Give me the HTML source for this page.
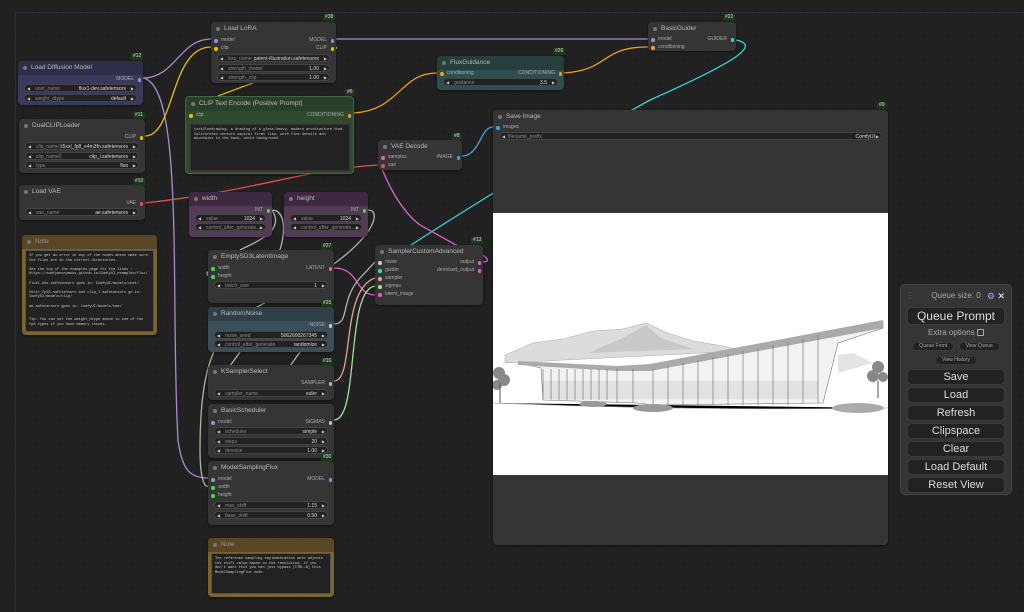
<!DOCTYPE html>
<html><head><meta charset="utf-8"><style>
*{margin:0;padding:0;box-sizing:border-box}
body{width:1024px;height:605px;overflow:hidden;background:#212121;font-family:"Liberation Sans",sans-serif;position:relative;
background-image:radial-gradient(#2a2a2a 0.6px,transparent 0.7px);background-size:6px 6px}
.n{position:absolute;background:#353535;border-radius:4px;box-shadow:0 1px 3px rgba(0,0,0,.5)}
.t{height:14px;line-height:14px;font-size:6.5px;color:#bbb;padding-left:13px;position:relative;border-radius:4px 4px 0 0}
.t:before{content:"";position:absolute;left:5px;top:5px;width:4px;height:4px;border-radius:50%;background:#777}
.id{position:absolute;font-size:5px;color:#ddd;background:#1d3a1d;padding:0 2px;line-height:7px;border-radius:1px}
.w{position:absolute;left:6px;right:6px;height:8px;background:#222;border-radius:4px;font-size:5px;line-height:8px;color:#888;padding:0 10px;border:0.5px solid #444}
.w:before{content:"◀";position:absolute;left:2px;color:#ccc;font-size:4px}
.w:after{content:"▶";position:absolute;right:2px;color:#ccc;font-size:4px;top:0}
.w b{position:absolute;right:10px;font-weight:normal;color:#ddd}
.p{position:absolute;font-size:5px;color:#aaa;line-height:7px}
.p i{position:absolute;top:2px;width:3.5px;height:3.5px;border-radius:50%}
.in{padding-left:10px}.in i{left:3px}
.out{text-align:right;padding-right:9px}.out i{right:2px}
.note{font-family:"Liberation Mono",monospace;font-size:3.6px;color:#ccc;white-space:pre;line-height:4.6px;position:absolute;background:#222;border:0.5px solid #555;padding:3px;overflow:hidden}
.qb{display:block;margin:0 6px 2px 6px;height:16px;background:#222;border:1px solid #3a3a3a;border-radius:5px;color:#ddd;font-size:11px;text-align:center;line-height:14px}
.sb{display:inline-block;height:9px;background:#222;border:1px solid #3a3a3a;border-radius:5px;color:#aaa;font-size:5px;line-height:7px;padding:0 6px}
</style></head><body>

<div style="position:absolute;left:15px;top:12px;width:1020px;height:600px;border:1px solid #2c3040;border-right:none;border-bottom:none"></div>

<svg width="1024" height="605" style="position:absolute;left:0;top:0" fill="none" stroke-width="1.3">
<path d="M143 78 C175 78 180 39 211 39" stroke="#a58cd0"/>
<path d="M143 78 C185 85 170 300 178 440 C182 470 190 478 208 478" stroke="#a58cd0"/>
<path d="M336 39 L648 39" stroke="#a58cd0"/>
<path d="M145 136 C175 136 170 47 211 47" stroke="#e8c000"/>
<path d="M336 47 C345 50 260 80 218 96" stroke="#e8c000"/>
<path d="M354 113 C400 110 400 73 437 73" stroke="#e8a020"/>
<path d="M564 73 C610 70 600 47 648 47" stroke="#e8a020"/>
<path d="M736 40 C760 45 740 60 650 100 C560 150 400 250 375 270" stroke="#30d8e0"/>
<path d="M145 203 C260 190 300 170 378 165" stroke="#e05050"/>
<path d="M462 156 C480 156 480 127 493 127" stroke="#40a8e0"/>
<path d="M334 268 C360 268 355 295 375 295" stroke="#e060d0"/>
<path d="M483 262 C495 262 480 250 465 250 L420 225 C400 210 385 180 378 157" stroke="#e060d0"/>
<path d="M272 210 C290 210 285 250 270 270 C240 300 200 260 208 276" stroke="#aab8a0"/>
<path d="M368 210 C385 210 370 250 290 290 C230 320 200 330 200 450 C200 480 205 488 208 486" stroke="#aab8a0"/>
<path d="M272 210 C285 230 260 240 240 250" stroke="#aab8a0"/>
<path d="M334 324 C350 324 340 300 360 278 L375 262" stroke="#aab8a0"/>
<path d="M334 381 C355 381 340 290 375 278" stroke="#e8a0a0"/>
<path d="M334 420 C360 420 345 290 375 286" stroke="#a0e0a0"/>
<path d="M240 352 L230 366 M300 352 L290 366" stroke="#aab8a0"/>
</svg>

<div class="id" style="left:323px;top:14px">#38</div>
<div class="n" style="left:211px;top:22px;width:125px;height:61px">
<div class="t">Load LoRA</div>
<div class="p in" style="left:0;top:15px"><i style="background:#a58cd0"></i>model</div>
<div class="p in" style="left:0;top:23px"><i style="background:#e8c000"></i>clip</div>
<div class="p out" style="right:0;top:15px"><i style="background:#a58cd0"></i>MODEL</div>
<div class="p out" style="right:0;top:23px"><i style="background:#e8c000"></i>CLIP</div>
<div class="w" style="top:32px">lora_name<b>patent-illustration.safetensors</b></div>
<div class="w" style="top:42px">strength_model<b>1.00</b></div>
<div class="w" style="top:51px">strength_clip<b>1.00</b></div>
</div>

<div class="id" style="left:131px;top:53px">#12</div>
<div class="n" style="left:18px;top:61px;width:125px;height:44px;background:#3a3a5e">
<div class="t" style="background:#2e2e48">Load Diffusion Model</div>
<div class="p out" style="right:0;top:15px"><i style="background:#a58cd0"></i>MODEL</div>
<div class="w" style="top:23px">unet_name<b>flux1-dev.safetensors</b></div>
<div class="w" style="top:33px">weight_dtype<b>default</b></div>
</div>

<div class="id" style="left:133px;top:112px">#11</div>
<div class="n" style="left:19px;top:119px;width:126px;height:54px">
<div class="t">DualCLIPLoader</div>
<div class="p out" style="right:0;top:15px"><i style="background:#e8c000"></i>CLIP</div>
<div class="w" style="top:23px">clip_name1<b>t5xxl_fp8_e4m3fn.safetensors</b></div>
<div class="w" style="top:33px">clip_name2<b>clip_l.safetensors</b></div>
<div class="w" style="top:42px">type<b>flux</b></div>
</div>

<div class="id" style="left:133px;top:178px">#10</div>
<div class="n" style="left:19px;top:185px;width:126px;height:35px">
<div class="t">Load VAE</div>
<div class="p out" style="right:0;top:15px"><i style="background:#e05050"></i>VAE</div>
<div class="w" style="top:23px">vae_name<b>ae.safetensors</b></div>
</div>

<div class="n" style="left:22px;top:235px;width:135px;height:100px;background:#7a6530">
<div class="t" style="background:#5a4524;color:#999">Note</div>
<div class="note" style="left:3px;top:15px;width:129px;height:82px">If you get an error in any of the nodes above make sure
the files are in the correct directories.

See the top of the examples page for the links :
https://comfyanonymous.github.io/ComfyUI_examples/flux/

flux1-dev.safetensors goes in: ComfyUI/models/unet/

t5xxl_fp16.safetensors and clip_l.safetensors go in:
ComfyUI/models/clip/

ae.safetensors goes in: ComfyUI/models/vae/


Tip: You can set the weight_dtype above to one of the
fp8 types if you have memory issues.</div>
</div>

<div class="id" style="left:345px;top:89px">#6</div>
<div class="n" style="left:185px;top:96px;width:169px;height:78px;background:#2f4a2f;border:1px solid #3f6a3f">
<div class="t" style="background:#2a3f2a">CLIP Text Encode (Positive Prompt)</div>
<div class="p in" style="left:0;top:15px"><i style="background:#e8c000"></i>clip</div>
<div class="p out" style="right:0;top:15px"><i style="background:#e8a020"></i>CONDITIONING</div>
<div class="note" style="left:4px;top:27px;width:160px;height:47px;border-color:#333;white-space:normal">txct2lnedrawing, a drawing of a glass-heavy, modern architecture that Californian venture capital firms like, with fine details and mountains in the back, white background</div>
</div>

<div class="n" style="left:189px;top:192px;width:83px;height:45px;background:#533a55">
<div class="t" style="background:#3e2a40">width</div>
<div class="p out" style="right:0;top:15px"><i style="background:#40e040"></i>INT</div>
<div class="w" style="top:22px">value<b>1024</b></div>
<div class="w" style="top:31px">control_after_generate...</div>
</div>
<div class="n" style="left:284px;top:192px;width:84px;height:45px;background:#533a55">
<div class="t" style="background:#3e2a40">height</div>
<div class="p out" style="right:0;top:15px"><i style="background:#40e040"></i>INT</div>
<div class="w" style="top:22px">value<b>1024</b></div>
<div class="w" style="top:31px">control_after_generate...</div>
</div>

<div class="id" style="left:321px;top:243px">#27</div>
<div class="n" style="left:208px;top:250px;width:126px;height:53px">
<div class="t">EmptySD3LatentImage</div>
<div class="p in" style="left:0;top:15px"><i style="background:#40e040"></i>width</div>
<div class="p in" style="left:0;top:23px"><i style="background:#40e040"></i>height</div>
<div class="p out" style="right:0;top:15px"><i style="background:#e060d0"></i>LATENT</div>
<div class="w" style="top:31px">batch_size<b>1</b></div>
</div>

<div class="id" style="left:321px;top:300px">#25</div>
<div class="n" style="left:208px;top:307px;width:126px;height:45px;background:#3a4f5a">
<div class="t" style="background:#2e3f48">RandomNoise</div>
<div class="p out" style="right:0;top:15px"><i style="background:#ccc"></i>NOISE</div>
<div class="w" style="top:24px">noise_seed<b>5062600267345</b></div>
<div class="w" style="top:33px">control_after_generate<b>randomize</b></div>
</div>

<div class="id" style="left:321px;top:358px">#16</div>
<div class="n" style="left:208px;top:365px;width:126px;height:35px">
<div class="t">KSamplerSelect</div>
<div class="p out" style="right:0;top:15px"><i style="background:#e8a0a0"></i>SAMPLER</div>
<div class="w" style="top:24px">sampler_name<b>euler</b></div>
</div>

<div class="n" style="left:208px;top:404px;width:126px;height:54px">
<div class="t">BasicScheduler</div>
<div class="p in" style="left:0;top:15px"><i style="background:#a58cd0"></i>model</div>
<div class="p out" style="right:0;top:15px"><i style="background:#a0e0a0"></i>SIGMAS</div>
<div class="w" style="top:23px">scheduler<b>simple</b></div>
<div class="w" style="top:33px">steps<b>20</b></div>
<div class="w" style="top:42px">denoise<b>1.00</b></div>
</div>

<div class="id" style="left:321px;top:454px">#30</div>
<div class="n" style="left:208px;top:461px;width:126px;height:64px">
<div class="t">ModelSamplingFlux</div>
<div class="p in" style="left:0;top:15px"><i style="background:#a58cd0"></i>model</div>
<div class="p in" style="left:0;top:23px"><i style="background:#40e040"></i>width</div>
<div class="p in" style="left:0;top:31px"><i style="background:#40e040"></i>height</div>
<div class="p out" style="right:0;top:15px"><i style="background:#a58cd0"></i>MODEL</div>
<div class="w" style="top:40px">max_shift<b>1.15</b></div>
<div class="w" style="top:50px">base_shift<b>0.50</b></div>
</div>

<div class="n" style="left:208px;top:538px;width:126px;height:59px;background:#7a6530">
<div class="t" style="background:#5a4524;color:#999">Note</div>
<div class="note" style="left:3px;top:15px;width:120px;height:41px;white-space:normal">The reference sampling implementation auto adjusts the shift value based on the resolution, if you don't want this you can just bypass (CTRL-B) this ModelSamplingFlux node.</div>
</div>

<div class="id" style="left:452px;top:133px">#8</div>
<div class="n" style="left:378px;top:140px;width:84px;height:30px">
<div class="t">VAE Decode</div>
<div class="p in" style="left:0;top:14px"><i style="background:#e060d0"></i>samples</div>
<div class="p in" style="left:0;top:22px"><i style="background:#e05050"></i>vae</div>
<div class="p out" style="right:0;top:14px"><i style="background:#40a8e0"></i>IMAGE</div>
</div>

<div class="id" style="left:553px;top:48px">#26</div>
<div class="n" style="left:437px;top:56px;width:127px;height:34px;background:#2f4f4f">
<div class="t" style="background:#263e3e">FluxGuidance</div>
<div class="p in" style="left:0;top:14px"><i style="background:#e8a020"></i>conditioning</div>
<div class="p out" style="right:0;top:14px"><i style="background:#e8a020"></i>CONDITIONING</div>
<div class="w" style="top:22px;left:6px;right:6px">guidance<b>3.5</b></div>
</div>

<div class="id" style="left:723px;top:14px">#22</div>
<div class="n" style="left:648px;top:22px;width:88px;height:29px">
<div class="t">BasicGuider</div>
<div class="p in" style="left:0;top:14px"><i style="background:#a58cd0"></i>model</div>
<div class="p in" style="left:0;top:22px"><i style="background:#e8a020"></i>conditioning</div>
<div class="p out" style="right:0;top:14px"><i style="background:#30d8e0"></i>GUIDER</div>
</div>

<div class="id" style="left:471px;top:237px">#13</div>
<div class="n" style="left:375px;top:245px;width:108px;height:60px">
<div class="t">SamplerCustomAdvanced</div>
<div class="p in" style="left:0;top:14px"><i style="background:#ccc"></i>noise</div>
<div class="p in" style="left:0;top:22px"><i style="background:#30d8e0"></i>guider</div>
<div class="p in" style="left:0;top:30px"><i style="background:#e8a0a0"></i>sampler</div>
<div class="p in" style="left:0;top:38px"><i style="background:#a0e0a0"></i>sigmas</div>
<div class="p in" style="left:0;top:46px"><i style="background:#e060d0"></i>latent_image</div>
<div class="p out" style="right:0;top:14px"><i style="background:#e060d0"></i>output</div>
<div class="p out" style="right:0;top:22px"><i style="background:#e060d0"></i>denoised_output</div>
</div>

<div class="id" style="left:877px;top:102px">#9</div>
<div class="n" style="left:493px;top:110px;width:395px;height:435px">
<div class="t">Save Image</div>
<div class="p in" style="left:0;top:14px"><i style="background:#40a8e0"></i>images</div>
<div class="w" style="top:22px;padding-left:8px">filename_prefix<b style="right:6px">ComfyUI</b></div>
<svg style="position:absolute;left:0;top:103px" width="395" height="262" viewBox="0 0 395 262">
<rect width="395" height="262" fill="#fff"/>
<path d="M12 142 L40 130 L70 126 L100 118 L130 116 L153 110 L175 120 L200 128 L230 133 L250 138 L12 150 Z" fill="#dcdcdc" stroke="#aaa" stroke-width=".5"/>
<path d="M95 140 L130 125 L153 112 L168 125 L200 136 Z" fill="#c8c8c8"/>
<path d="M345 142 L360 140 L380 150 L345 160Z" fill="#e4e4e4"/>
<path d="M25 150 L125 155 L157 153 L390 109 L390 115 L345 130 L330 190 L160 192 L145 190 L50 187 L48 155 Z" fill="#f2f2f2" stroke="#777" stroke-width=".6"/>
<path d="M25 148 L125 153 L157 151 L390 107 L390 115 L157 158 L125 158 L25 152Z" fill="#aaa"/>
<rect x="50" y="168" width="275" height="18" fill="#e2e2e2"/>
<g stroke="#666" stroke-width=".6">
<path d="M50 156V187M58 156V187M66 156V187M74 156V187M82 156V187M90 156V187M98 156V187M106 156V187M114 156V187M124 156V190M140 156V190M160 156V192M175 153V192M190 150V192M205 147V192M220 144V192M235 141V192M250 138V192M265 135V192M280 132V192M295 129V192M310 126V191M325 122V190"/>
</g>
<path d="M0 190 Q200 198 395 195" stroke="#999" stroke-width=".6"/>
<ellipse cx="100" cy="191" rx="14" ry="3" fill="#999"/>
<ellipse cx="160" cy="195" rx="20" ry="4" fill="#999"/>
<ellipse cx="365" cy="195" rx="26" ry="5" fill="#aaa"/>
<g fill="#888"><circle cx="6" cy="160" r="6"/><circle cx="11" cy="167" r="6"/><circle cx="4" cy="172" r="5"/></g><path d="M7 170V190" stroke="#555"/>
<g fill="#888"><circle cx="385" cy="154" r="6"/><circle cx="380" cy="163" r="6"/><circle cx="390" cy="164" r="5"/></g><path d="M385 168V185" stroke="#555"/>
</svg>
</div>

<div style="position:absolute;left:900px;top:284px;width:112px;height:211px;background:#353535;border-radius:5px;border:1px solid #444">
<div style="position:relative;height:22px;font-size:8px;color:#aaa;text-align:center;line-height:22px">Queue size: 0
<span style="position:absolute;left:5px;color:#777">⋮</span>
<span style="position:absolute;right:16px;top:0;color:#b8a0e0;font-size:9px">⚙</span>
<span style="position:absolute;right:6px;top:0;color:#fff;font-size:9px">✕</span></div>
<div class="qb" style="height:18px;line-height:16px;font-size:12px">Queue Prompt</div>
<div style="text-align:center;color:#aaa;font-size:8px;line-height:11px">Extra options <span style="display:inline-block;width:7px;height:7px;border:1px solid #aaa;border-radius:1px;vertical-align:-1px"></span></div>
<div style="text-align:center;line-height:10px"><span class="sb">Queue Front</span> <span class="sb">View Queue</span></div>
<div style="text-align:center;line-height:12px;margin-bottom:4px"><span class="sb">View History</span></div>
<div class="qb">Save</div><div class="qb">Load</div><div class="qb">Refresh</div><div class="qb">Clipspace</div><div class="qb">Clear</div><div class="qb">Load Default</div><div class="qb">Reset View</div>
</div>
</body></html>
